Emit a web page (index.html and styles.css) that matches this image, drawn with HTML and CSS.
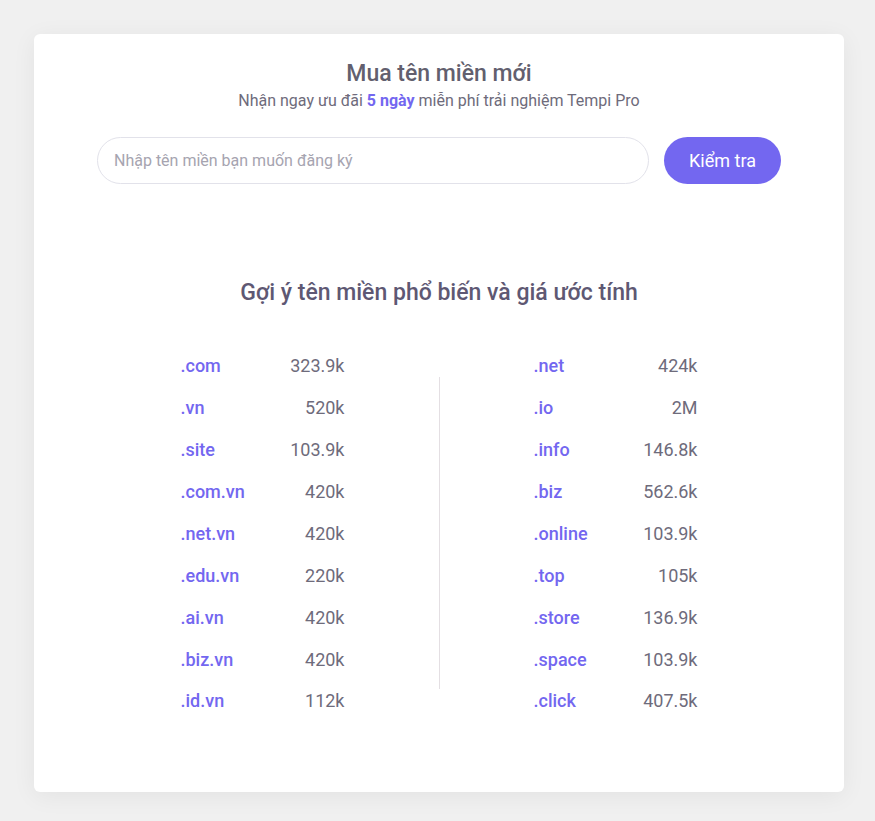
FILE: index.html
```html
<!DOCTYPE html>
<html lang="vi">
<head>
<meta charset="utf-8">
<title>Mua tên miền mới</title>
<link rel="stylesheet" href="styles.css">
</head>
<body>
<main class="card">
  <header class="head">
    <h1 class="title">Mua tên miền mới</h1>
    <p class="subtitle">Nhận ngay ưu đãi <strong class="accent">5 ngày</strong> miễn phí trải nghiệm Tempi Pro</p>
  </header>
  <form class="search" onsubmit="return false">
    <input class="search-input" type="text" placeholder="Nhập tên miền bạn muốn đăng ký">
    <button class="search-btn" type="submit">Kiểm tra</button>
  </form>
  <h2 class="section-title">Gợi ý tên miền phổ biến và giá ước tính</h2>
  <div class="grid">
    <ul class="col">
      <li class="row"><span class="tld">.com</span><span class="price">323.9k</span></li>
      <li class="row"><span class="tld">.vn</span><span class="price">520k</span></li>
      <li class="row"><span class="tld">.site</span><span class="price">103.9k</span></li>
      <li class="row"><span class="tld">.com.vn</span><span class="price">420k</span></li>
      <li class="row"><span class="tld">.net.vn</span><span class="price">420k</span></li>
      <li class="row"><span class="tld">.edu.vn</span><span class="price">220k</span></li>
      <li class="row"><span class="tld">.ai.vn</span><span class="price">420k</span></li>
      <li class="row"><span class="tld">.biz.vn</span><span class="price">420k</span></li>
      <li class="row"><span class="tld">.id.vn</span><span class="price">112k</span></li>
    </ul>
    <div class="divider"></div>
    <ul class="col">
      <li class="row"><span class="tld">.net</span><span class="price">424k</span></li>
      <li class="row"><span class="tld">.io</span><span class="price">2M</span></li>
      <li class="row"><span class="tld">.info</span><span class="price">146.8k</span></li>
      <li class="row"><span class="tld">.biz</span><span class="price">562.6k</span></li>
      <li class="row"><span class="tld">.online</span><span class="price">103.9k</span></li>
      <li class="row"><span class="tld">.top</span><span class="price">105k</span></li>
      <li class="row"><span class="tld">.store</span><span class="price">136.9k</span></li>
      <li class="row"><span class="tld">.space</span><span class="price">103.9k</span></li>
      <li class="row"><span class="tld">.click</span><span class="price">407.5k</span></li>
    </ul>
  </div>
</main>
</body>
</html>
```
FILE: styles.css
```css
* { box-sizing: border-box; }
html, body { margin: 0; padding: 0; }
body {
  background: #f0f0f0;
  font-family: Roboto, "Noto Sans", Arial, sans-serif;
  color: #6e6b7b;
  padding: 34px 31px 29px 34px;
}
.card {
  background: #fff;
  border-radius: 6px;
  box-shadow: 0 4px 24px rgba(0, 0, 0, 0.06);
  padding: 26px 0 70px;
}
.head { text-align: center; }
.title {
  margin: 0;
  font-size: 23px;
  line-height: 28px;
  font-weight: 500;
  color: #625f6e;
}
.subtitle {
  margin: 3px 0 0;
  font-size: 16px;
  line-height: 20px;
  color: #6e6b7b;
}
.accent { color: #7367f0; font-weight: 700; }
.search {
  display: flex;
  gap: 15px;
  width: 684px;
  margin: 26px auto 0;
}
.search-input {
  flex: 1;
  height: 47px;
  border: 1px solid #e2e2ea;
  border-radius: 24px;
  padding: 0 16px;
  font: inherit;
  font-size: 16px;
  color: #6e6b7b;
  outline: none;
}
.search-input::placeholder { color: #a6a4b0; }
.search-btn {
  width: 117px;
  height: 47px;
  border: none;
  border-radius: 24px;
  background: #7367f0;
  color: #fff;
  font: inherit;
  font-size: 18px;
  cursor: pointer;
}
.section-title {
  margin: 95px 0 0;
  text-align: center;
  font-size: 23px;
  line-height: 28px;
  font-weight: 500;
  color: #5e5873;
}
.grid {
  display: flex;
  justify-content: center;
  align-items: center;
  gap: 94px;
  margin-top: 38px;
}
.col {
  list-style: none;
  margin: 0;
  padding: 0;
  width: 164px;
}
.row {
  display: flex;
  justify-content: space-between;
  align-items: center;
  height: 41.875px;
  font-size: 18px;
}
.tld { color: #7367f0; font-weight: 500; }
.price { color: #6e6b7b; }
.divider {
  width: 1px;
  height: 312px;
  background: #e4dfe3;
}
```
